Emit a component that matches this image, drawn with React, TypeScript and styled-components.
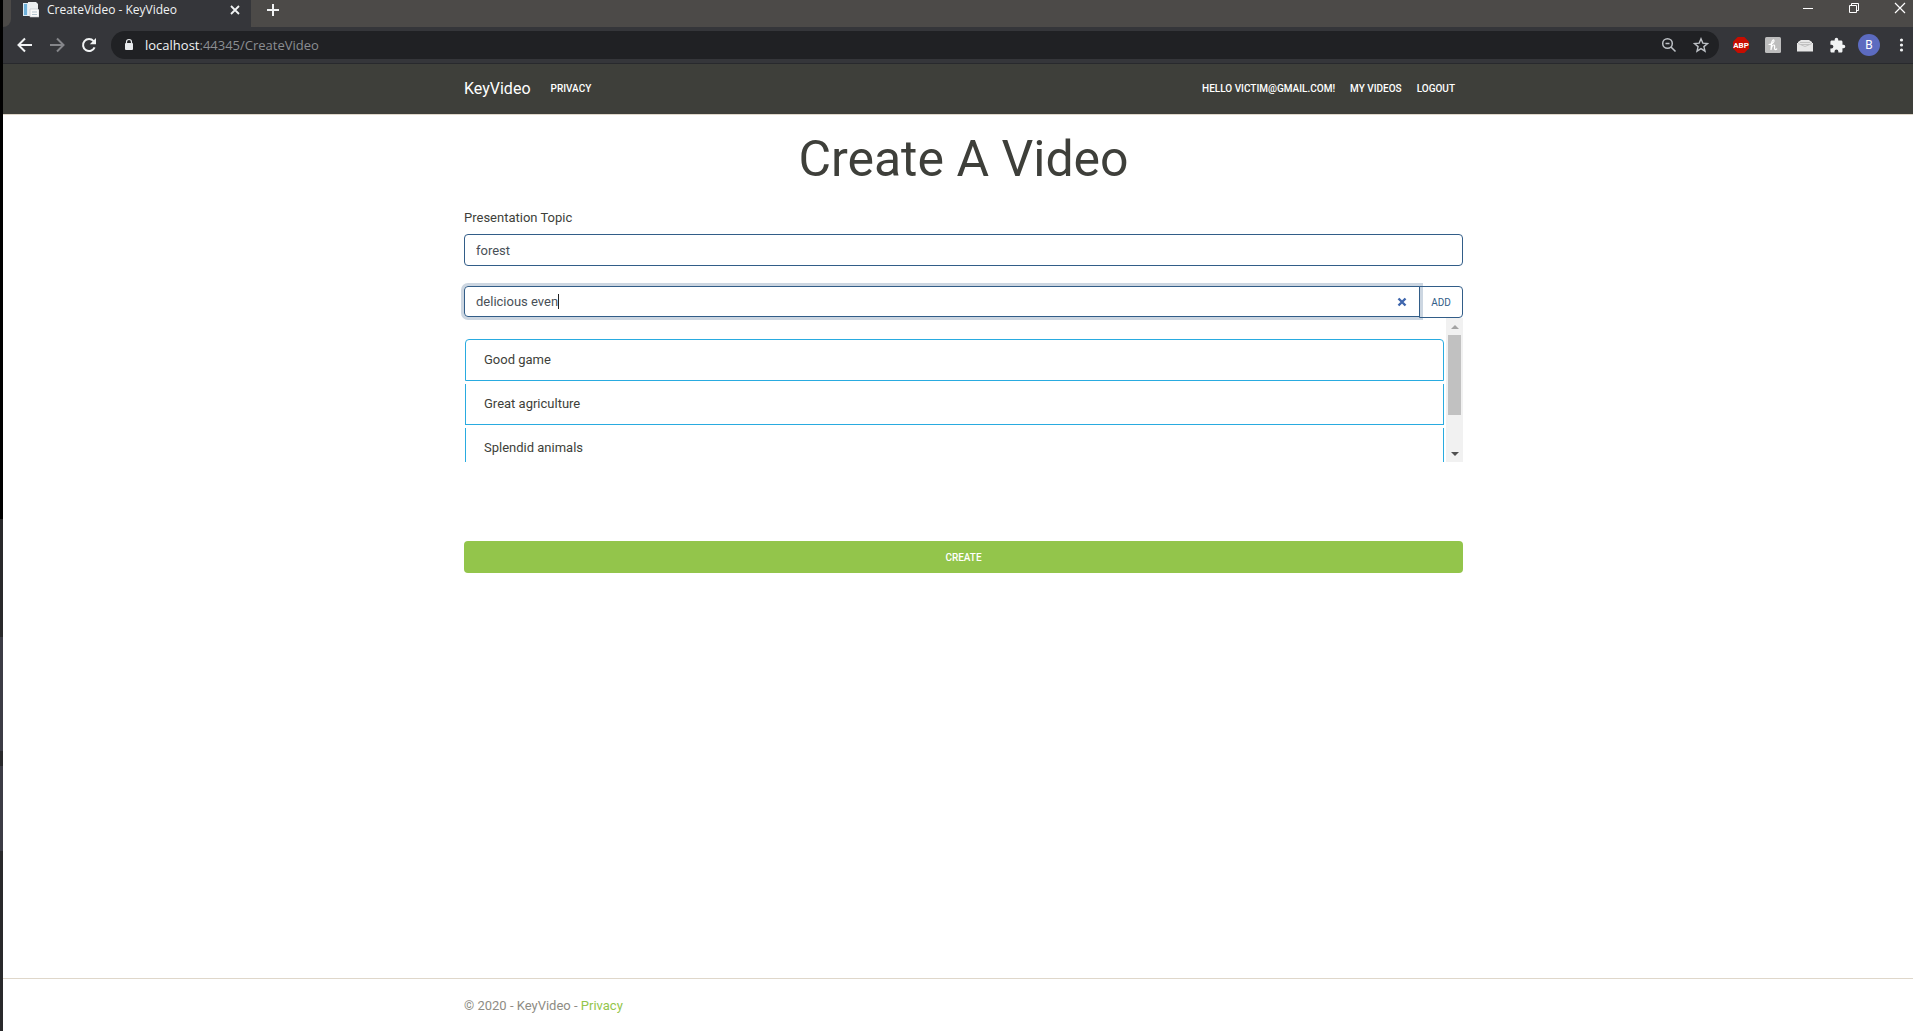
import React, { useState } from "react";
import styled, { createGlobalStyle } from "styled-components";

const GlobalStyle = createGlobalStyle`
  *, *::before, *::after { box-sizing: border-box; }
  body { margin: 0; background: #fff; font-family: Roboto, "Liberation Sans", sans-serif; }
  button, input { font: inherit; margin: 0; }
`;

const Desktop = styled.div`
  display: flex;
  min-height: 100vh;
`;

const DesktopEdge = styled.div`
  flex: 0 0 3px;
  background: linear-gradient(
    #000 0 519px, #29292b 519px 637px, #3c3c45 637px 751px,
    #29292b 751px 766px, #3c3c45 766px 851px, #29292b 851px
  );
`;

const Browser = styled.div`
  flex: 1;
  min-width: 0;
  display: flex;
  flex-direction: column;
`;

const TabStrip = styled.div`
  display: flex;
  align-items: flex-start;
  height: 27px;
  background: #4c4a48;
  font-family: "Open Sans", "Noto Sans", sans-serif;
`;

const PreviousTab = styled.div`
  width: 8px;
  height: 27px;
  border-bottom-right-radius: 8px;
  background: #4c4a48;
`;

const TabBackdrop = styled.div`
  display: flex;
  background: #35363a;
`;

const Tab = styled.div`
  display: flex;
  align-items: center;
  width: 240px;
  height: 20px;
  padding: 0 8px 0 12px;
  gap: 8px;
  color: #f1f3f4;
  font-size: 12px;
  line-height: 20px;
`;

const TabTitle = styled.span`
  flex: 1;
  white-space: nowrap;
`;

const StripRest = styled.div`
  flex: 1;
  display: flex;
  justify-content: space-between;
  height: 27px;
  padding-left: 11px;
  border-bottom-left-radius: 8px;
  background: #4c4a48;
`;

const WindowControls = styled.div`
  display: flex;
  gap: 28px;
  padding-right: 4px;
`;

const IconButton = styled.button<{ $w?: number; $h?: number; $color?: string }>`
  display: flex;
  align-items: center;
  justify-content: center;
  flex: none;
  width: ${(p) => p.$w ?? 32}px;
  height: ${(p) => p.$h ?? 28}px;
  padding: 0;
  border: 0;
  background: none;
  color: ${(p) => p.$color ?? "#f1f3f4"};
  svg { display: block; }
`;

const Toolbar = styled.div`
  display: flex;
  align-items: center;
  height: 37px;
  padding-left: 6px;
  background: #35363a;
  border-bottom: 1px solid #28292d;
`;

const Omnibox = styled.div`
  flex: 1;
  display: flex;
  align-items: center;
  height: 28px;
  margin: 0 6px;
  padding: 0 2px 0 12px;
  border-radius: 14px;
  background: #202124;
  font: 13px/20px "Open Sans", "Noto Sans", sans-serif;
`;

const Address = styled.span`
  flex: 1;
  padding-left: 10px;
  color: #8b8e92;
  em { font-style: normal; color: #f1f3f4; }
`;

const Avatar = styled.span`
  width: 22px;
  height: 22px;
  border-radius: 50%;
  background: #5c6bc0;
  color: #fff;
  font-size: 12px;
  line-height: 22px;
  text-align: center;
`;

const Container = styled.div`
  width: 100%;
  max-width: 999px;
  margin: 0 auto;
`;

const Navbar = styled.header`
  height: 51px;
  padding-left: 11px;
  background: #3e3f3a;
  border-bottom: 1px solid #dfd7ca;
`;

const NavInner = styled(Container)`
  display: flex;
  align-items: center;
  height: 50px;
`;

const Brand = styled.a`
  margin-right: 20px;
  color: #fff;
  font-size: 16px;
  line-height: 24px;
  text-decoration: none;
`;

const NavLinks = styled.nav`
  flex: 1;
  display: flex;
  align-items: center;
  gap: 15px;
  padding-right: 8px;
`;

const navText = `
  color: #fff;
  font-size: 10px;
  line-height: 16px;
  font-weight: 500;
  text-transform: uppercase;
  text-decoration: none;
`;

const NavLink = styled.a<{ $push?: boolean }>`
  ${navText}
  margin-left: ${(p) => (p.$push ? "auto" : "0")};
`;

const NavButton = styled.button`
  padding: 0;
  border: 0;
  background: none;
  ${navText}
`;

const Main = styled.main`
  flex: 1;
  padding-left: 11px;
`;

const Title = styled.h1`
  margin: 0;
  padding: 14px 0 19px;
  color: #3e3f3a;
  font-size: 50px;
  line-height: 60px;
  font-weight: 400;
  text-align: center;
`;

const Label = styled.label`
  display: block;
  margin-bottom: 6px;
  color: #3e3f3a;
  font-size: 13px;
  line-height: 20px;
`;

const TextInput = styled.input`
  display: block;
  width: 100%;
  height: 32px;
  padding: 0 11px;
  border: 1px solid #325d88;
  border-radius: 4px;
  outline: 0;
  background: #fff;
  color: #495057;
  font-size: 13px;
`;

const InputGroup = styled.div`
  display: flex;
  margin-top: 20px;
`;

const FocusedField = styled.div`
  flex: 1;
  display: flex;
  align-items: center;
  height: 31px;
  padding: 0 10px 0 11px;
  border: 1px solid #325d88;
  border-radius: 4px 0 0 4px;
  box-shadow: 0 0 0 3px #ccd6e1;
  color: #495057;
  font-size: 13px;
`;

const PhraseInput = styled.input`
  field-sizing: content;
  padding: 0;
  border: 0;
  outline: 0;
  background: none;
  color: inherit;
`;

const Caret = styled.span`
  width: 1px;
  height: 15px;
  margin-right: auto;
  background: #222;
`;

const AddButton = styled.button`
  width: 44px;
  height: 32px;
  margin-left: -1px;
  padding: 0;
  border: 1px solid #325d88;
  border-radius: 0 4px 4px 0;
  background: transparent;
  color: #325d88;
  font-size: 10px;
`;

const ScrollArea = styled.div`
  display: flex;
  height: 144px;
  overflow: hidden;
`;

const PhraseList = styled.ul`
  flex: 1;
  display: flex;
  flex-direction: column;
  gap: 3px;
  margin: 0;
  padding: 21px 2px 0 1px;
  list-style: none;
`;

const Phrase = styled.li`
  flex: none;
  padding: 10px 18px;
  border: 1px solid #29abe0;
  border-top: 0;
  color: #3e3f3a;
  font-size: 13px;
  line-height: 20px;
  &:first-child {
    border-top: 1px solid #29abe0;
    border-radius: 4px 4px 0 0;
  }
`;

const ScrollTrack = styled.div`
  display: flex;
  flex-direction: column;
  align-items: center;
  width: 17px;
  background: #f1f1f1;
`;

const ScrollThumb = styled.div`
  width: 13px;
  height: 80px;
  margin-bottom: auto;
  background: #c1c1c1;
`;

const CreateButton = styled.button`
  display: block;
  width: 100%;
  height: 32px;
  margin-top: 79px;
  padding: 0;
  border: 0;
  border-radius: 4px;
  background: #93c54b;
  color: #fff;
  font-size: 10px;
  font-weight: 500;
`;

const Footer = styled.footer`
  padding: 1px 0 0 11px;
  border-top: 1px solid #dfd7ca;
  color: #8e8c84;
  font-size: 13px;
  line-height: 51px;
  a { color: #93c54b; text-decoration: none; }
`;

const Icon = ({ size = 16, children, sw = 2 }: { size?: number; sw?: number; children: React.ReactNode }) => (
  <svg width={size} height={size} viewBox="0 0 16 16" fill="none" stroke="currentColor" strokeWidth={sw} aria-hidden="true">
    {children}
  </svg>
);

const PHRASES = ["Good game", "Great agriculture", "Splendid animals"];

export default function App() {
  const [topic, setTopic] = useState("forest");
  const [phrase, setPhrase] = useState("delicious even");
  return (
    <Desktop>
      <GlobalStyle />
      <DesktopEdge />
      <Browser>
        <TabStrip>
          <TabBackdrop>
            <PreviousTab />
            <Tab>
              <svg width="16" height="16" viewBox="0 0 16 16" aria-hidden="true">
                <path d="M0 1h5v13H0z" fill="#dcebf5" />
                <path d="M1 2h3v11H1z" fill="#6fb1da" />
                <path d="M5 0h8l2 2v12H5z" fill="#eceff1" />
                <path d="M7 7h8l1 1v7H7z" fill="#fafafa" stroke="#bcc5cb" strokeWidth=".6" />
                <path d="M9 10h5M9 12.5h5" stroke="#b4c4ce" />
              </svg>
              <TabTitle>CreateVideo - KeyVideo</TabTitle>
              <IconButton $w={16} $h={16} aria-label="Close tab">
                <Icon sw={1.8}><path d="M4 4l8 8M12 4l-8 8" /></Icon>
              </IconButton>
            </Tab>
          </TabBackdrop>
          <StripRest>
            <IconButton $w={22} $h={20} aria-label="New tab">
              <Icon sw={2}><path d="M8 2v12M2 8h12" /></Icon>
            </IconButton>
            <WindowControls>
              <IconButton $w={18} $h={15} $color="#fff" aria-label="Minimize">
                <Icon sw={1}><path d="M3 8.5h10" /></Icon>
              </IconButton>
              <IconButton $w={18} $h={15} $color="#fff" aria-label="Restore">
                <Icon sw={1}><path d="M3.5 5.5h7v7h-7zM5.5 5.5v-2h7v7h-2" /></Icon>
              </IconButton>
              <IconButton $w={18} $h={15} $color="#fff" aria-label="Close window">
                <Icon sw={1.2}><path d="M3 3l10 10M13 3L3 13" /></Icon>
              </IconButton>
            </WindowControls>
          </StripRest>
        </TabStrip>
        <Toolbar>
          <IconButton aria-label="Back">
            <Icon><path d="M15 8H2M8 1.5L1.5 8L8 14.5" /></Icon>
          </IconButton>
          <IconButton $color="#85868a" aria-label="Forward">
            <Icon><path d="M1 8h13M8 1.5L14.5 8L8 14.5" /></Icon>
          </IconButton>
          <IconButton aria-label="Reload">
            <Icon>
              <path d="M13.6 10.3A6 6 0 1 1 12.6 4.1" />
              <path d="M15 1v6.200H8.8z" fill="currentColor" stroke="none" />
            </Icon>
          </IconButton>
          <Omnibox>
            <svg width="12" height="14" viewBox="0 0 12 14" aria-hidden="true">
              <rect x="2" y="5" width="8" height="7" rx="1" fill="#e8eaed" />
              <path d="M3.5 5.5V4a2.500 2.500 0 0 1 5 0v1.500" fill="none" stroke="#e8eaed" strokeWidth="1.2" />
            </svg>
            <Address><em>localhost</em>:44345/CreateVideo</Address>
            <IconButton $color="#bdc1c6" aria-label="Zoom">
              <Icon sw={1.5}><circle cx="6.5" cy="6.5" r="4.8" /><path d="M10 10l4.500 4.500M4.500 6.500h4" /></Icon>
            </IconButton>
            <IconButton $color="#bdc1c6" aria-label="Bookmark this page">
              <Icon sw={1.4}><path d="M8 1.800l1.800 4.300 4.700.4-3.600 3.100 1.100 4.600L8 11.700l-4 2.500 1.100-4.600L1.500 6.500l4.700-.4z" /></Icon>
            </IconButton>
          </Omnibox>
          <IconButton aria-label="Adblock Plus">
            <svg width="16" height="16" viewBox="0 0 16 16">
              <path d="M4.700 0h6.600L16 4.700v6.600L11.300 16H4.700L0 11.300V4.700z" fill="#c70d00" />
              <text x="8" y="11" fontSize="8" fontWeight="700" textAnchor="middle" fill="#fff" fontFamily="Roboto, sans-serif">ABP</text>
            </svg>
          </IconButton>
          <IconButton aria-label="Honey">
            <svg width="16" height="16" viewBox="0 0 16 16">
              <rect width="16" height="16" rx="1.5" fill="#bdbdbd" />
              <path d="M4 7.500c3 0 5.500-2.500 5-4S6.800 3.500 6.500 6.500L6 13c.5-3 1.500-5 2.800-5s.7 2.500.7 3.500 1 1.500 2.200.5" fill="none" stroke="#fff" strokeWidth="1.2" strokeLinecap="round" />
            </svg>
          </IconButton>
          <IconButton aria-label="Mail extension">
            <svg width="16" height="16" viewBox="0 0 16 16">
              <path d="M1 5l3-2h8l3 2v1h1v8.500H0V6h1z" fill="#e6e6e6" />
              <path d="M1 6.500l7 3 7-3M3 5.500h10M4 7.500h8" fill="none" stroke="#b8b8b8" strokeWidth=".8" />
            </svg>
          </IconButton>
          <IconButton aria-label="Extensions">
            <svg width="17" height="17" viewBox="0 0 24 24" fill="#f1f3f4">
              <path d="M20.500 11H19V7c0-1.100-.9-2-2-2h-4V3.500a2.500 2.500 0 0 0-5 0V5H4c-1.100 0-2 .9-2 2v3.800h1.500a2.700 2.700 0 0 1 0 5.400H2V20c0 1.100.9 2 2 2h3.800v-1.500a2.700 2.700 0 0 1 5.400 0V22H17c1.100 0 2-.9 2-2v-4h1.500a2.500 2.500 0 0 0 0-5z" />
            </svg>
          </IconButton>
          <IconButton aria-label="Profile"><Avatar>B</Avatar></IconButton>
          <IconButton $w={28} aria-label="Menu">
            <Icon><g fill="currentColor" stroke="none"><circle cx="10.5" cy="3" r="1.6" /><circle cx="10.5" cy="8" r="1.6" /><circle cx="10.5" cy="13" r="1.6" /></g></Icon>
          </IconButton>
        </Toolbar>
        <Navbar>
          <NavInner>
            <Brand href="#home">KeyVideo</Brand>
            <NavLinks>
              <NavLink href="#privacy">Privacy</NavLink>
              <NavLink href="#account" $push>Hello victim@gmail.com!</NavLink>
              <NavLink href="#videos">My Videos</NavLink>
              <NavButton type="button">Logout</NavButton>
            </NavLinks>
          </NavInner>
        </Navbar>
        <Main>
          <Container>
            <Title>Create A Video</Title>
            <Label htmlFor="topic">Presentation Topic</Label>
            <TextInput id="topic" value={topic} onChange={(e) => setTopic(e.target.value)} />
            <InputGroup>
              <FocusedField>
                <PhraseInput aria-label="Phrase" value={phrase} onChange={(e) => setPhrase(e.target.value)} />
                <Caret />
                <IconButton $w={14} $h={14} $color="#3f66ad" aria-label="Clear" onClick={() => setPhrase("")}>
                  <Icon size={14} sw={2.8}><path d="M4 4l8 8M12 4l-8 8" /></Icon>
                </IconButton>
              </FocusedField>
              <AddButton type="button">ADD</AddButton>
            </InputGroup>
            <ScrollArea>
              <PhraseList>
                {PHRASES.map((p) => <Phrase key={p}>{p}</Phrase>)}
              </PhraseList>
              <ScrollTrack>
                <IconButton $w={17} $h={17} $color="#a3a3a3" aria-label="Scroll up">
                  <Icon><path d="M8 6l4 4H4z" fill="currentColor" stroke="none" /></Icon>
                </IconButton>
                <ScrollThumb />
                <IconButton $w={17} $h={17} $color="#505050" aria-label="Scroll down">
                  <Icon><path d="M8 10l4-4H4z" fill="currentColor" stroke="none" /></Icon>
                </IconButton>
              </ScrollTrack>
            </ScrollArea>
            <CreateButton type="button">CREATE</CreateButton>
          </Container>
        </Main>
        <Footer>
          <Container>© 2020 - KeyVideo - <a href="#privacy">Privacy</a></Container>
        </Footer>
      </Browser>
    </Desktop>
  );
}
